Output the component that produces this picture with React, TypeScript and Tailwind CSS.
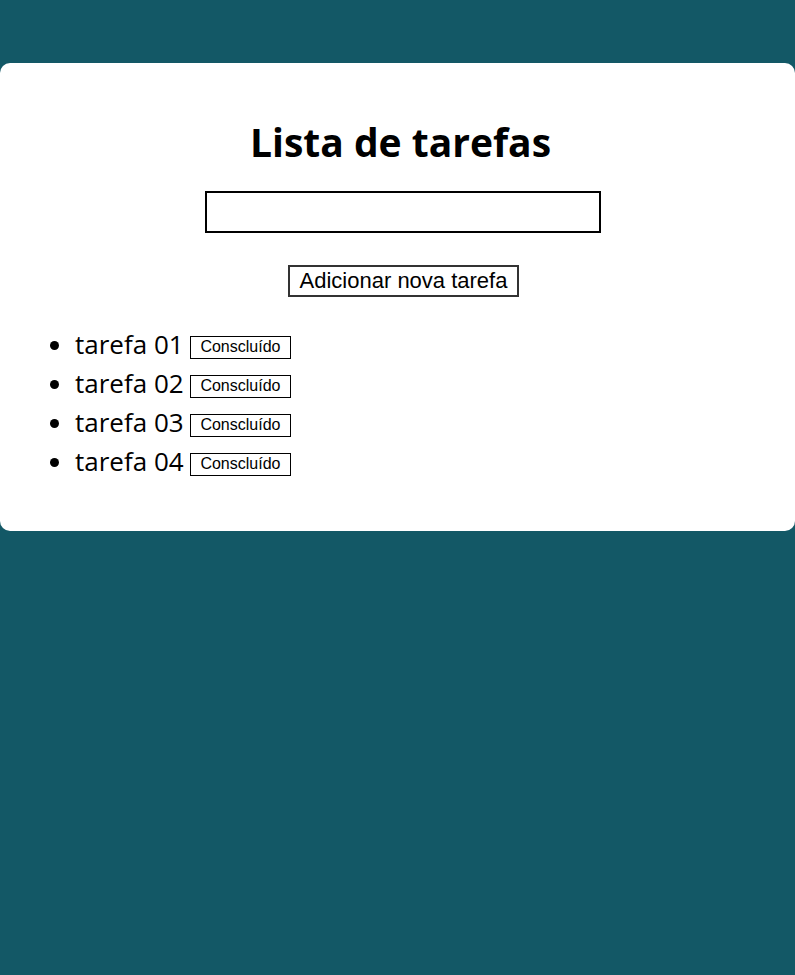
import React from 'react';

const tarefas = ['tarefa 01', 'tarefa 02', 'tarefa 03', 'tarefa 04'];

export default function App() {
  return (
    <div className="min-h-[975px] bg-[#135866] pt-[63px]" style={{ fontFamily: '"Open Sans", sans-serif' }}>
      <div className="bg-white rounded-[10px] pt-[52px] pb-[50px] pl-[41px] pr-[31px]">
        <h1 className="text-center pr-[4px] text-[39px] font-bold leading-[54px] text-black">Lista de tarefas</h1>

        <div className="flex flex-col items-center mt-[22px]">
          <input type="text" className="w-[396px] h-[42px] border-2 border-black bg-white outline-none" />
          <button className="mt-[32px] ml-[2px] h-[32px] px-[10px] border-2 border-[#333] bg-white text-[22px] leading-none text-black font-['Liberation_Sans',Arial,sans-serif]">
            Adicionar nova tarefa
          </button>
        </div>

        <ul className="list-disc pl-[34px] mt-[28px] text-[26px] leading-[39px] text-black">
          {tarefas.map((t) => (
            <li key={t}>
              {t}{' '}
              <button className="h-[23px] pl-[9px] pr-[10px] border border-black bg-white text-[16px] leading-none align-[2px] font-['Liberation_Sans',Arial,sans-serif]">
                Consclu&iacute;do
              </button>
            </li>
          ))}
        </ul>
      </div>
    </div>
  );
}
